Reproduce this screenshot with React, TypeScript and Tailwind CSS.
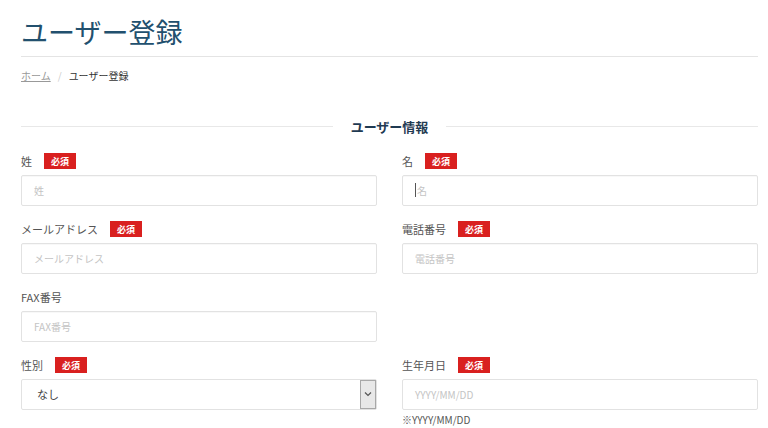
import React from 'react';

const font = { fontFamily: '"Noto Sans CJK JP", "Noto Sans", sans-serif' };

function Required() {
  return (
    <span className="ml-[12px] inline-flex h-[16px] w-[32px] items-center justify-center bg-[#d9201f] text-[9px] font-bold leading-none text-white">
      必須
    </span>
  );
}

function Field({
  label,
  placeholder,
  required,
  caret,
}: {
  label: string;
  placeholder: string;
  required?: boolean;
  caret?: boolean;
}) {
  return (
    <div className="flex flex-col">
      <div className="flex h-[17px] items-center text-[11px] text-[#555]">
        {label}
        {required && <Required />}
      </div>
      <div className="mt-[5px] flex h-[31px] items-center rounded-[2px] border border-[#e2e2e2] bg-white px-[12px] text-[10px] text-[#c4c4c4] shadow-[inset_0_1px_1px_rgba(0,0,0,0.03)]">
        {caret && <span className="mr-[1px] h-[14px] w-[1px] bg-[#555]" />}
        {placeholder}
      </div>
    </div>
  );
}

export default function App() {
  return (
    <main className="min-h-screen bg-white pl-[21px] pr-[10px] pt-[12px]" style={font}>
      {/* Header */}
      <h1 className="text-[27px] leading-[40px] font-normal text-[#22506e]">ユーザー登録</h1>
      <div className="mt-[4px] h-px bg-[#e4e4e4]" />

      {/* Breadcrumb */}
      <div className="mt-[11px] flex items-center text-[10px] text-[#333]">
        <span className="text-[#999] underline">ホーム</span>
        <span className="mx-[7px] text-[#ccc]">/</span>
        <span>ユーザー登録</span>
      </div>

      {/* Section title */}
      <div className="mt-[34px] flex items-center gap-[18px]">
        <div className="h-px flex-1 bg-[#e8e8e8]" />
        <h2 className="text-[13px] font-bold text-[#1f3a52]">ユーザー情報</h2>
        <div className="h-px flex-1 bg-[#e8e8e8]" />
      </div>

      {/* Form */}
      <div className="mt-[16px] grid grid-cols-2 gap-x-[25px] gap-y-[15px]">
        <Field label="姓" placeholder="姓" required />
        <Field label="名" placeholder="名" required caret />
        <Field label="メールアドレス" placeholder="メールアドレス" required />
        <Field label="電話番号" placeholder="電話番号" required />
        <Field label="FAX番号" placeholder="FAX番号" />
        <div />
        <div className="flex flex-col">
          <div className="flex h-[17px] items-center text-[11px] text-[#555]">
            性別
            <Required />
          </div>
          <div className="mt-[5px] flex h-[31px] items-center rounded-[2px] border border-[#e2e2e2] bg-white pl-[15px] text-[11px] text-[#444]">
            <span className="flex-1">なし</span>
            <span className="flex h-[29px] w-[16px] items-center justify-center border border-[#a8a8a8] bg-[#e8e8e8]">
              <svg width="8" height="6" viewBox="0 0 8 6">
                <path d="M1 1.5 L4 4.5 L7 1.5" fill="none" stroke="#555" strokeWidth="1.2" />
              </svg>
            </span>
          </div>
        </div>
        <div className="flex flex-col">
          <div className="flex h-[17px] items-center text-[11px] text-[#555]">
            生年月日
            <Required />
          </div>
          <div className="mt-[5px] flex h-[31px] items-center rounded-[2px] border border-[#e2e2e2] bg-white px-[12px] text-[10px] text-[#c4c4c4]">
            YYYY/MM/DD
          </div>
          <div className="mt-[2px] text-[10px] text-[#555]">※YYYY/MM/DD</div>
        </div>
      </div>
    </main>
  );
}
